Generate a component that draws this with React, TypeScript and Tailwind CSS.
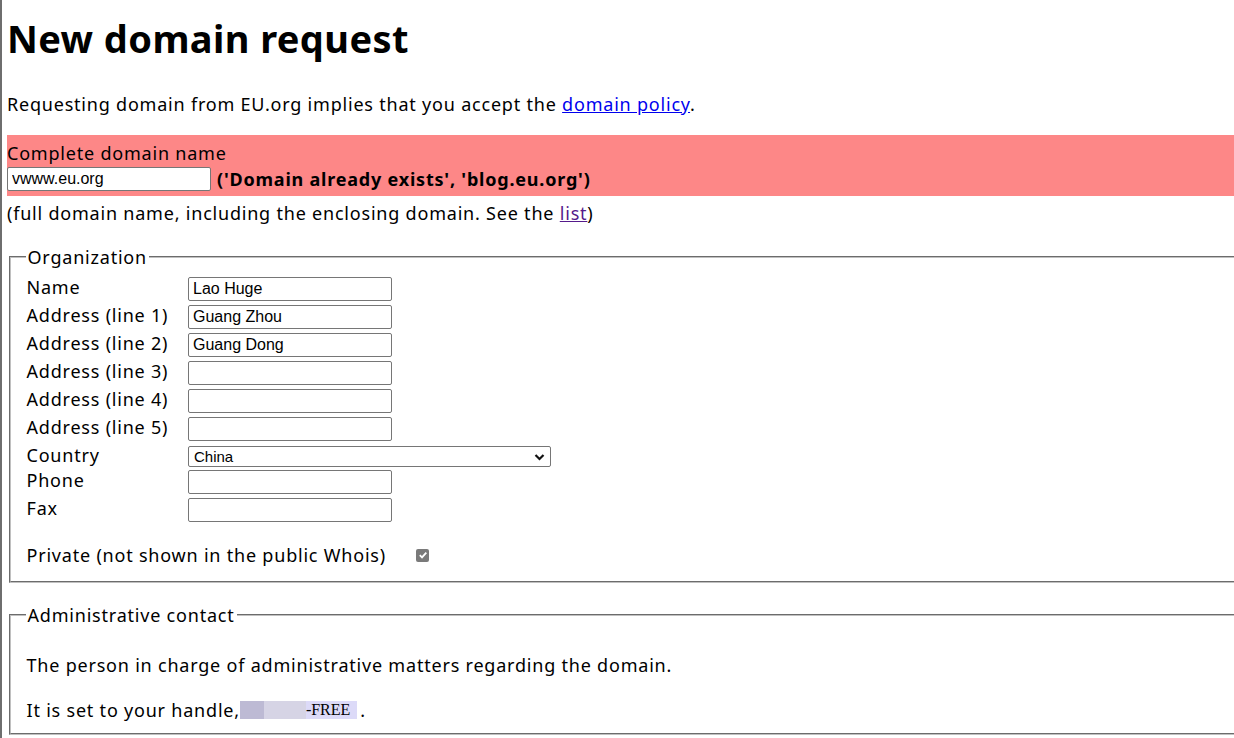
const orgFields = [
  { label: 'Name', value: 'Lao Huge' },
  { label: 'Address (line 1)', value: 'Guang Zhou' },
  { label: 'Address (line 2)', value: 'Guang Dong' },
  { label: 'Address (line 3)', value: '' },
  { label: 'Address (line 4)', value: '' },
  { label: 'Address (line 5)', value: '' },
];

const inputClass =
  "h-[24px] w-[204px] rounded-[2px] border border-[#767676] bg-white px-[4px] font-['Liberation_Sans',Arial,sans-serif] text-[16px] tracking-normal text-black outline-none";

function Row({ label, value }: { label: string; value: string }) {
  return (
    <div className="flex h-[28px]">
      <div className="w-[162.5px] pl-[1px] leading-[24px]">{label}</div>
      <input className={`mt-[2px] ${inputClass}`} defaultValue={value} />
    </div>
  );
}

export default function App() {
  return (
    <div className="h-[738px] w-[1234px] overflow-hidden border-l-2 border-[#6e6e6e] bg-white font-['Noto_Sans',sans-serif] text-[18px] tracking-[0.044em] text-black">
      <div className="w-[1260px] pl-[5px]">
        <h1 className="mt-[14px] text-[38px] font-bold leading-[48px] tracking-[0.4px]">New domain request</h1>
        <p className="mt-[30px] leading-[24px]">
          Requesting domain from EU.org implies that you accept the{' '}
          <a href="#" className="text-[#0000ee] underline">
            domain policy
          </a>
          .
        </p>

        <div className="mt-[19px] bg-[#fd8787] pt-[6px] pb-[5px]">
          <div className="leading-[24px]">Complete domain name</div>
          <div className="mt-[2px] flex items-center gap-[6px]">
            <input className={inputClass} defaultValue="vwww.eu.org" />
            <b className="leading-[24px]">('Domain already exists', 'blog.eu.org')</b>
          </div>
        </div>
        <p className="mt-[5px] leading-[24px]">
          (full domain name, including the enclosing domain. See the{' '}
          <a href="#" className="text-[#551a8b] underline">
            list
          </a>
          )
        </p>

        <fieldset className="mx-[2px] mt-[20px] border-2 border-[#c0c0c0] pt-[6.3px] pr-[13.5px] pb-[14px] pl-[14.5px] [border-style:groove]">
          <legend className="px-[2px] leading-[24px]">Organization</legend>
          <div className="flex flex-col">
            {orgFields.map((f) => (
              <Row key={f.label} label={f.label} value={f.value} />
            ))}
            <div className="flex h-[25px]">
              <div className="w-[162.5px] pl-[1px] leading-[24px]">Country</div>
              <div className="mt-[3px] flex h-[21px] w-[363px] items-center justify-between rounded-[2px] border border-[#767676] bg-white pr-[5px] pl-[5px] font-['Liberation_Sans',Arial,sans-serif] text-[15px] tracking-normal">
                <span>China</span>
                <svg width="11" height="8" viewBox="0 0 11 8" fill="none">
                  <path d="M1.5 2 L5.5 6 L9.5 2" stroke="#111" strokeWidth="2.2" />
                </svg>
              </div>
            </div>
            <Row label="Phone" value="" />
            <Row label="Fax" value="" />
            <div className="mt-[19px] flex items-center">
              <span className="w-[390.5px] pl-[1px] leading-[24px]">Private (not shown in the public Whois)</span>
              <span className="flex h-[13px] w-[13px] items-center justify-center rounded-[2px] bg-[#7a7a7a]">
                <svg width="10" height="10" viewBox="0 0 10 10" fill="none">
                  <path d="M1.8 5.2 L4 7.4 L8.3 2.6" stroke="white" strokeWidth="1.8" />
                </svg>
              </span>
            </div>
          </div>
        </fieldset>

        <fieldset className="mx-[2px] mt-[20px] border-2 border-[#c0c0c0] pt-[6.3px] pr-[13.5px] pb-[11.25px] pl-[14.5px] [border-style:groove]">
          <legend className="px-[2px] leading-[24px]">Administrative contact</legend>
          <p className="mt-[19px] pl-[1px] leading-[24px]">The person in charge of administrative matters regarding the domain.</p>
          <p className="mt-[21px] flex items-center pl-[1px] leading-[24px]">
            <span>It is set to your handle,</span>
            <span className="flex h-[18px] items-center bg-[#dcdaf8] pr-[7px] tracking-normal">
              <span className="h-full w-[24px] bg-[#bdbad4]" />
              <span className="h-full w-[42px] bg-[#d6d4e5]" />
              <span className="font-['Liberation_Serif',serif] text-[16px] leading-[18px]">-FREE</span>
            </span>
            <span className="ml-[3px]">.</span>
          </p>
        </fieldset>
      </div>
    </div>
  );
}
